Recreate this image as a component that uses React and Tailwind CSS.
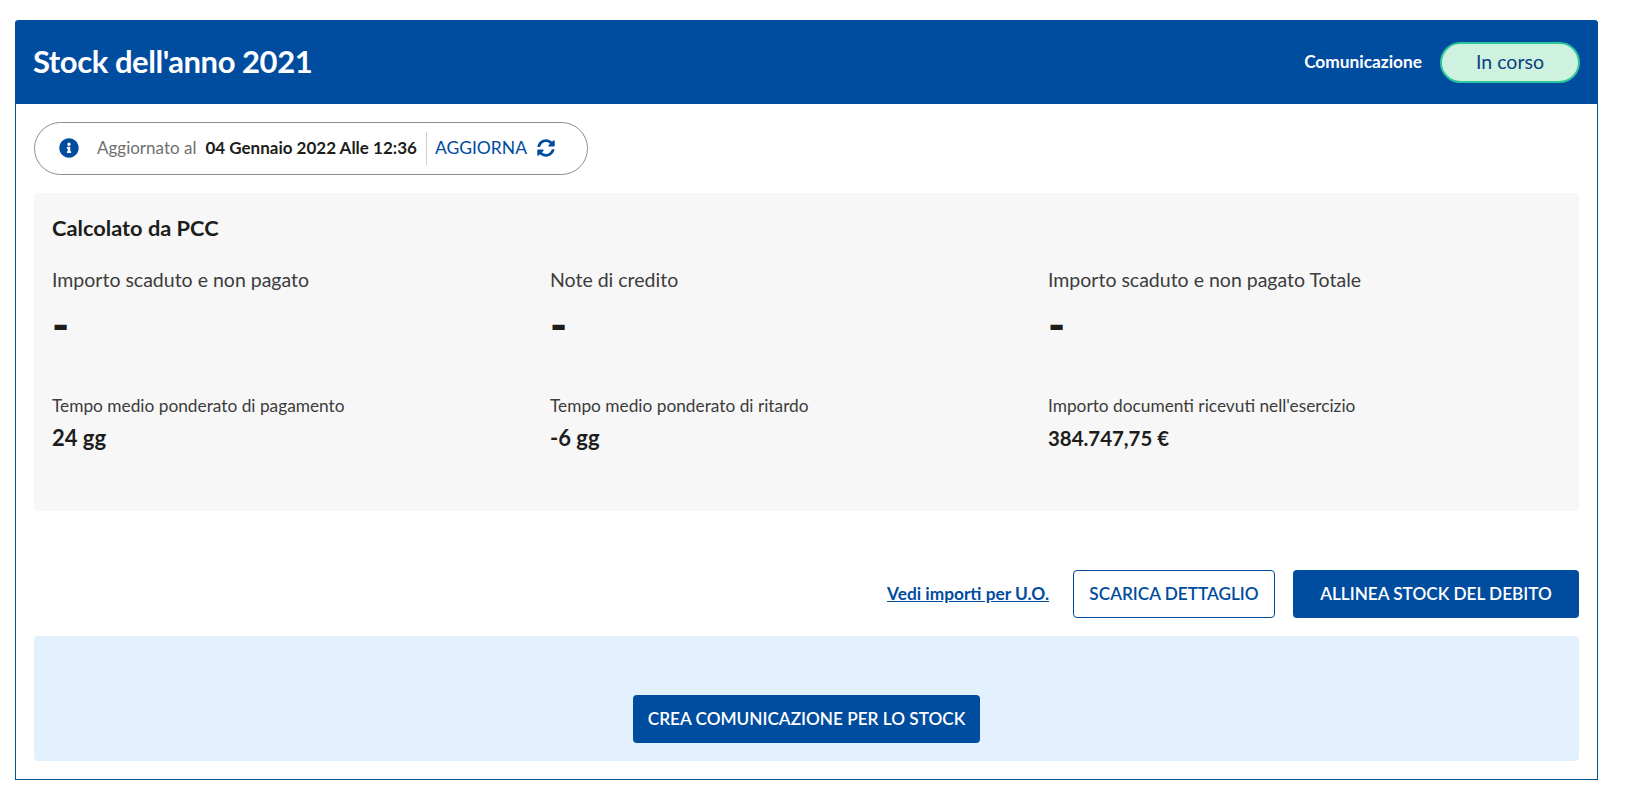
import React from 'react';
import { FaInfoCircle, FaSyncAlt } from 'react-icons/fa';

const topStats = [
  { label: 'Importo scaduto e non pagato', value: '-' },
  { label: 'Note di credito', value: '-' },
  { label: 'Importo scaduto e non pagato Totale', value: '-' },
];

const bottomStats = [
  { label: 'Tempo medio ponderato di pagamento', value: '24 gg', valueClass: 'text-[22px]' },
  { label: 'Tempo medio ponderato di ritardo', value: '-6 gg', valueClass: 'text-[22px]' },
  { label: "Importo documenti ricevuti nell'esercizio", value: '384.747,75 €', valueClass: 'text-[20.4px]' },
];

const App = () => {
  return (
    <div className="min-h-[800px] bg-white pt-5 pl-[15px] pr-[29px] font-['Lato',sans-serif] text-[#1d1d1b]">
      <div className="h-[760px] rounded-t-[4px] border border-t-0 border-[#00558f]">
        {/* Header */}
        <div className="-mx-px flex h-[84px] items-center justify-between rounded-t-[4px] bg-[#004c9f] pl-[18px] pr-[18px]">
          <h1 className="pb-px text-[31px] font-bold tracking-[-0.45px] text-white">Stock dell'anno 2021</h1>
          <div className="flex items-center gap-[18px]">
            <span className="text-[17.3px] font-bold text-white">Comunicazione</span>
            <span className="flex h-[41px] w-[140px] items-center justify-center rounded-full border-2 border-[#2bc79a] bg-[#cff1e0] pb-px text-[19.5px] text-[#0b3f80]">
              In corso
            </span>
          </div>
        </div>

        <div className="px-[18px] pt-[18px]">
          {/* Update info */}
          <div className="flex h-[53px] w-[554px] items-center rounded-full border border-[#8c8c8c] pb-px pl-6 text-[17px]">
            <FaInfoCircle className="text-[20px] text-[#004c9f]" />
            <span className="ml-[18px] text-[#6f6f6f]">Aggiornato al</span>
            <span className="ml-[9px] font-bold">04 Gennaio 2022 Alle 12:36</span>
            <span className="ml-[9px] h-[33px] w-px bg-[#d0d0d0]" />
            <span className="ml-[8px] text-[17.5px] text-[#004c9f]">AGGIORNA</span>
            <FaSyncAlt className="ml-[10px] text-[18px] text-[#004c9f]" />
          </div>

          {/* PCC panel */}
          <div className="mt-[18px] h-[318px] rounded-[4px] bg-[#f7f7f7] pl-[18px] pr-[33px] pt-[21px]">
            <h2 className="text-[21.8px] font-bold leading-[28px]">Calcolato da PCC</h2>
            <div className="mt-[25px] grid grid-cols-3">
              {topStats.map((stat) => (
                <div key={stat.label}>
                  <div className="text-[19.5px] leading-[26px] text-[#3c3c3c]">{stat.label}</div>
                  <div className="mt-[14px] text-[46px] font-black leading-[34px]">{stat.value}</div>
                </div>
              ))}
            </div>
            <div className="mt-[54px] grid grid-cols-3">
              {bottomStats.map((stat) => (
                <div key={stat.label}>
                  <div className="text-[17.3px] leading-[22px] text-[#3c3c3c]">{stat.label}</div>
                  <div className={`mt-[7px] font-bold leading-[28px] ${stat.valueClass}`}>{stat.value}</div>
                </div>
              ))}
            </div>
          </div>

          {/* Actions */}
          <div className="mt-[59px] flex items-center justify-end">
            <a className="text-[17.3px] font-bold text-[#004c9f] underline">Vedi importi per U.O.</a>
            <button className="ml-6 h-12 w-[202px] rounded-[4px] border border-[#004c9f] text-[17.2px] font-semibold text-[#004c9f]">
              SCARICA DETTAGLIO
            </button>
            <button className="ml-[18px] h-12 w-[286px] rounded-[4px] bg-[#004c9f] text-[17.2px] font-semibold text-white">
              ALLINEA STOCK DEL DEBITO
            </button>
          </div>

          {/* Create */}
          <div className="mt-[18px] flex h-[125px] items-start justify-center rounded-[4px] bg-[#e3f1fe] pt-[59px]">
            <button className="h-12 w-[347px] rounded-[4px] bg-[#004c9f] text-[17.2px] font-semibold text-white">
              CREA COMUNICAZIONE PER LO STOCK
            </button>
          </div>
        </div>
      </div>
    </div>
  );
};

export default App;
